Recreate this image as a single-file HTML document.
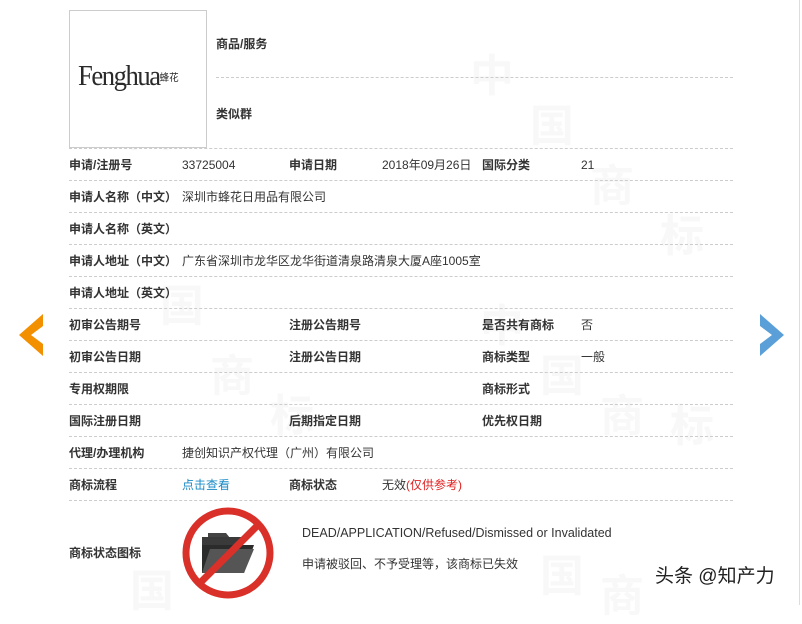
<!DOCTYPE html>
<html><head><meta charset="utf-8">
<style>
*{margin:0;padding:0;box-sizing:border-box}
body{width:802px;height:605px;overflow:hidden;background:#fff;position:relative;font-family:"Liberation Sans","Noto Sans CJK SC",sans-serif;font-size:12px;color:#333}
.a{position:absolute;white-space:nowrap;line-height:16px}
.b{font-weight:bold;color:#333}
.ln{position:absolute;left:69px;width:664px;border-top:1px dashed #ccc;height:0}
.wm{position:absolute;color:#f8f8f8;font-size:44px;font-weight:bold;font-family:"Noto Sans CJK SC",sans-serif}
</style></head><body>
<div style="position:absolute;right:2px;top:0;width:1px;height:605px;background:#ddd"></div>
<div class="wm" style="left:78px;top:40px">中</div>
<div class="wm" style="left:128px;top:95px">国</div>
<div class="wm" style="left:160px;top:270px">国</div>
<div class="wm" style="left:210px;top:340px">商</div>
<div class="wm" style="left:270px;top:380px">标</div>
<div class="wm" style="left:470px;top:40px">中</div>
<div class="wm" style="left:530px;top:90px">国</div>
<div class="wm" style="left:590px;top:150px">商</div>
<div class="wm" style="left:660px;top:200px">标</div>
<div class="wm" style="left:480px;top:290px">中</div>
<div class="wm" style="left:540px;top:340px">国</div>
<div class="wm" style="left:600px;top:380px">商</div>
<div class="wm" style="left:670px;top:390px">标</div>
<div class="wm" style="left:540px;top:540px">国</div>
<div class="wm" style="left:600px;top:560px">商</div>
<div class="wm" style="left:130px;top:555px">国</div>

<div style="position:absolute;left:69px;top:10px;width:138px;height:138px;border:1px solid #ccc;background:#fff"></div>
<div class="a" style="left:78px;top:62px;font-family:'Liberation Serif',serif;font-size:28px;line-height:30px;color:#2a2a2a;letter-spacing:-1.5px;transform:scaleX(0.95);transform-origin:left">Fenghua<span style="font-size:10px;font-family:'Noto Sans CJK SC',sans-serif;letter-spacing:0;position:relative;top:-4px">蜂花</span></div>

<div class="a b" style="left:216px;top:36px">商品/服务</div>
<div class="ln" style="left:216px;width:517px;top:77px"></div>
<div class="a b" style="left:216px;top:106px">类似群</div>
<div class="ln" style="top:148px"></div>

<div class="a b" style="left:69px;top:157px">申请/注册号</div><div class="a" style="left:182px;top:157px">33725004</div>
<div class="a b" style="left:289px;top:157px">申请日期</div><div class="a" style="left:382px;top:157px">2018年09月26日</div>
<div class="a b" style="left:482px;top:157px">国际分类</div><div class="a" style="left:581px;top:157px">21</div>
<div class="ln" style="top:180px"></div>
<div class="a b" style="left:69px;top:189px">申请人名称（中文）</div><div class="a" style="left:182px;top:189px">深圳市蜂花日用品有限公司</div>
<div class="ln" style="top:212px"></div>
<div class="a b" style="left:69px;top:221px">申请人名称（英文）</div>
<div class="ln" style="top:244px"></div>
<div class="a b" style="left:69px;top:253px">申请人地址（中文）</div><div class="a" style="left:182px;top:253px">广东省深圳市龙华区龙华街道清泉路清泉大厦A座1005室</div>
<div class="ln" style="top:276px"></div>
<div class="a b" style="left:69px;top:285px">申请人地址（英文）</div>
<div class="ln" style="top:308px"></div>
<div class="a b" style="left:69px;top:317px">初审公告期号</div>
<div class="a b" style="left:289px;top:317px">注册公告期号</div>
<div class="a b" style="left:482px;top:317px">是否共有商标</div><div class="a" style="left:581px;top:317px">否</div>
<div class="ln" style="top:340px"></div>
<div class="a b" style="left:69px;top:349px">初审公告日期</div>
<div class="a b" style="left:289px;top:349px">注册公告日期</div>
<div class="a b" style="left:482px;top:349px">商标类型</div><div class="a" style="left:581px;top:349px">一般</div>
<div class="ln" style="top:372px"></div>
<div class="a b" style="left:69px;top:381px">专用权期限</div>
<div class="a b" style="left:482px;top:381px">商标形式</div>
<div class="ln" style="top:404px"></div>
<div class="a b" style="left:69px;top:413px">国际注册日期</div>
<div class="a b" style="left:289px;top:413px">后期指定日期</div>
<div class="a b" style="left:482px;top:413px">优先权日期</div>
<div class="ln" style="top:436px"></div>
<div class="a b" style="left:69px;top:445px">代理/办理机构</div><div class="a" style="left:182px;top:445px">捷创知识产权代理（广州）有限公司</div>
<div class="ln" style="top:468px"></div>
<div class="a b" style="left:69px;top:477px">商标流程</div><div class="a" style="left:182px;top:477px;color:#1a8bc6">点击查看</div>
<div class="a b" style="left:289px;top:477px">商标状态</div><div class="a" style="left:382px;top:477px">无效<span style="color:#e02020">(仅供参考)</span></div>
<div class="ln" style="top:500px"></div>
<div class="a b" style="left:69px;top:545px">商标状态图标</div>
<svg style="position:absolute;left:180px;top:505px" width="100" height="100" viewBox="0 0 100 100">
<path d="M28 28h18l4 5h-22z" fill="#444"/>
<path d="M22 32h40v14H22z" fill="#3a3a3a"/>
<path d="M22 40h52l-10 28H22z" fill="#2b2b2b"/>
<path d="M30 44h44l-10 24H22z" fill="#555"/>
<circle cx="48" cy="48" r="42" fill="none" stroke="#d9302a" stroke-width="7"/>
<line x1="80" y1="18" x2="18" y2="80" stroke="#d9302a" stroke-width="7"/>
</svg>
<div class="a" style="left:302px;top:525px;font-size:12.5px">DEAD/APPLICATION/Refused/Dismissed or Invalidated</div>
<div class="a" style="left:302px;top:556px">申请被驳回、不予受理等，该商标已失效</div>
<div class="a" style="left:655px;top:565px;font-size:19px;line-height:24px;color:#222">头条 @知产力</div>

<svg style="position:absolute;left:15px;top:314px" width="30" height="42" viewBox="0 0 30 42"><path d="M28 0L4 21l24 21V30L16 21l12-9z" fill="#f39000"/></svg>
<svg style="position:absolute;left:758px;top:314px" width="30" height="42" viewBox="0 0 30 42"><path d="M2 0l24 21L2 42V30l12-9L2 12z" fill="#5a9fd8"/></svg>
</body></html>
